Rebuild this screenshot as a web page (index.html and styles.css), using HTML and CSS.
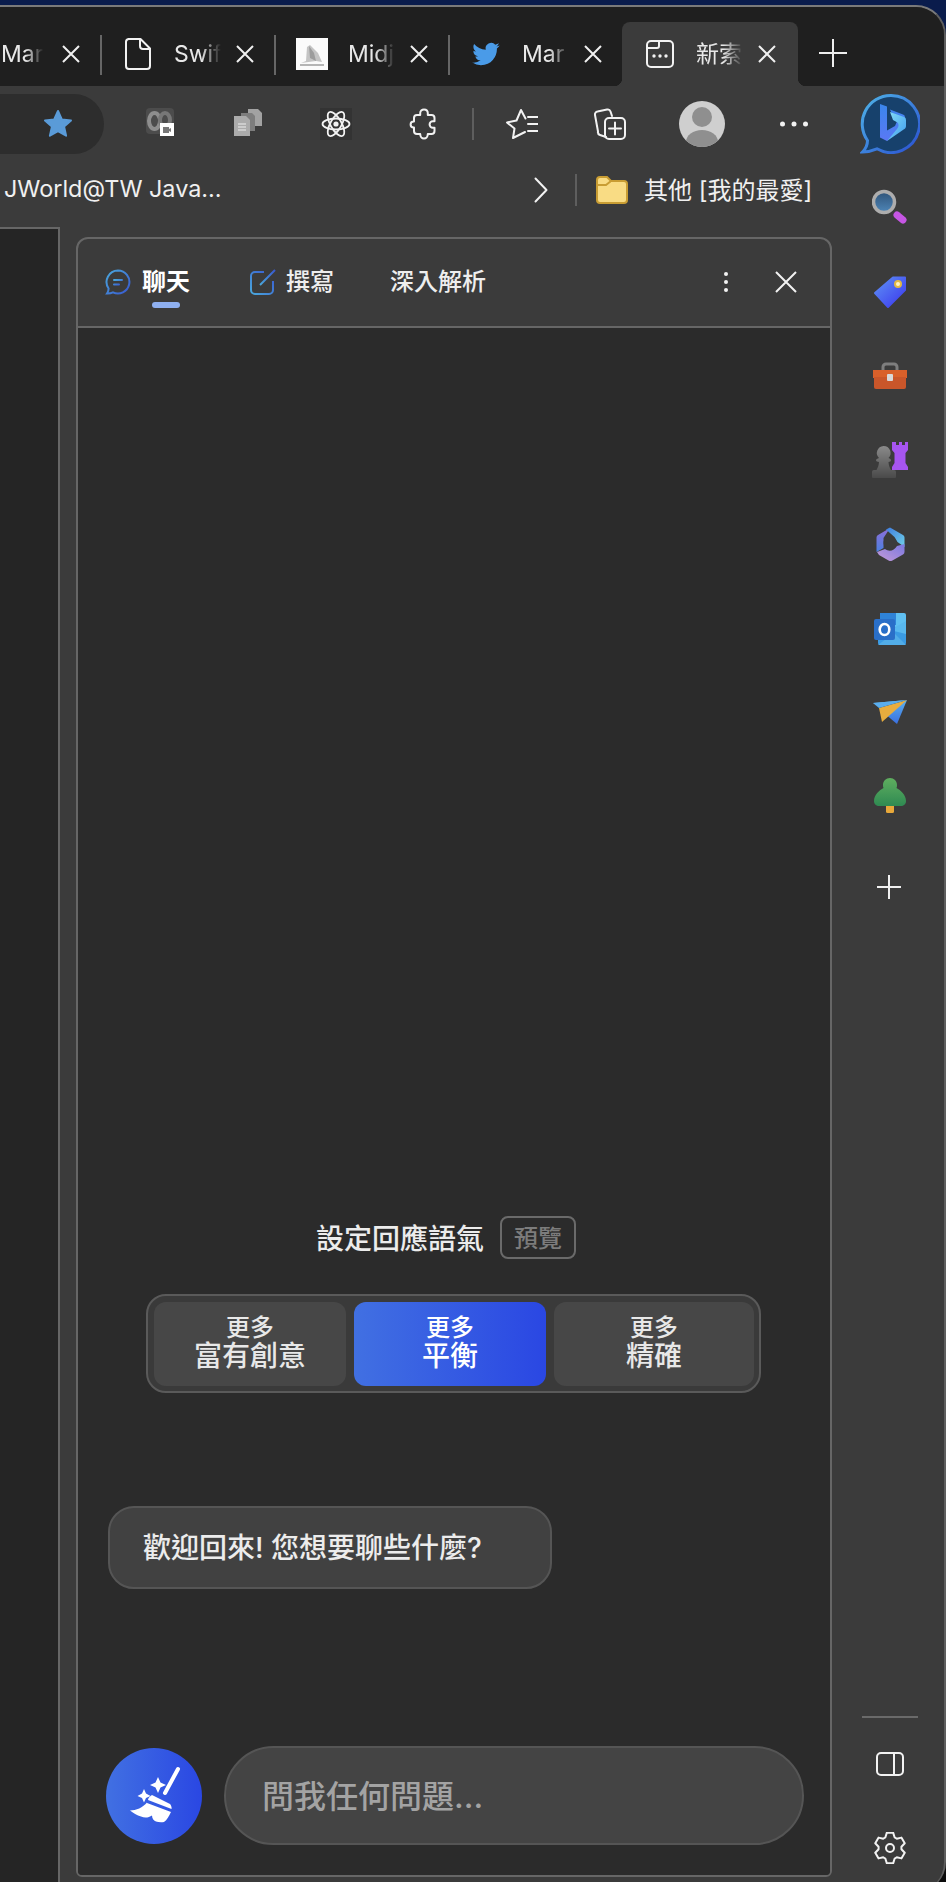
FILE: index.html
```html
<!DOCTYPE html>
<html lang="zh-Hant">
<head>
<meta charset="utf-8">
<title>Bing 聊天</title>
<link rel="stylesheet" href="styles.css">
</head>
<body>
<div class="window">
  <div class="tabstrip">
    <div class="tab tab-first">
      <span class="tab-label">Mar</span>
      <svg class="tab-close" viewBox="0 0 22 22"><path d="M3 3l16 16M19 3L3 19"/></svg>
    </div>
    <span class="tab-sep"></span>
    <div class="tab">
      <svg class="favicon" viewBox="0 0 32 32"><path class="line" d="M6.500 1h12L28 10.500V28a3 3 0 0 1-3 3H7a3 3 0 0 1-3-3V4a3 3 0 0 1 2.500-3zM18 1v7a3 3 0 0 0 3 3h7"/></svg>
      <span class="tab-label">Swif</span>
      <svg class="tab-close" viewBox="0 0 22 22"><path d="M3 3l16 16M19 3L3 19"/></svg>
    </div>
    <span class="tab-sep"></span>
    <div class="tab">
      <svg class="favicon" viewBox="0 0 32 32"><rect width="32" height="32" fill="#fbfbfb"/><path d="M5 25l5-2 1-14 3-2 8 8 4 9-6-1z" fill="#c4c4c4"/><path d="M13 8l1 12 6 3-2-8z" fill="#9c9c9c"/><path d="M4 26h24v2H4z" fill="#b5b5b5"/></svg>
      <span class="tab-label">Midj</span>
      <svg class="tab-close" viewBox="0 0 22 22"><path d="M3 3l16 16M19 3L3 19"/></svg>
    </div>
    <span class="tab-sep"></span>
    <div class="tab">
      <svg class="favicon" viewBox="-2 -2 28 28"><path fill="#4a9be8" d="M23.953 4.570a10 10 0 0 1-2.825.775 4.958 4.958 0 0 0 2.163-2.723c-.951.555-2.005.959-3.127 1.184a4.920 4.920 0 0 0-8.384 4.482C7.690 8.095 4.067 6.130 1.640 3.162a4.822 4.822 0 0 0-.666 2.475c0 1.710.870 3.213 2.188 4.096a4.904 4.904 0 0 1-2.228-.616v.060a4.923 4.923 0 0 0 3.946 4.827 4.996 4.996 0 0 1-2.212.085 4.936 4.936 0 0 0 4.604 3.417 9.867 9.867 0 0 1-6.102 2.105c-.390 0-.779-.023-1.170-.067a13.995 13.995 0 0 0 7.557 2.209c9.053 0 13.998-7.496 13.998-13.985 0-.210 0-.420-.015-.630A9.935 9.935 0 0 0 24 4.590z"/></svg>
      <span class="tab-label">Mar</span>
      <svg class="tab-close" viewBox="0 0 22 22"><path d="M3 3l16 16M19 3L3 19"/></svg>
    </div>
    <div class="tab tab-active">
      <svg class="favicon" viewBox="0 0 32 32"><path class="line" d="M7 3h18a4 4 0 0 1 4 4v18a4 4 0 0 1-4 4H7a4 4 0 0 1-4-4V7a4 4 0 0 1 4-4zM3 10h10a2 2 0 0 0 2-2V3"/><circle cx="10" cy="18" r="1.700" fill="#f2f2f2"/><circle cx="16" cy="18" r="1.700" fill="#f2f2f2"/><circle cx="22" cy="18" r="1.700" fill="#f2f2f2"/></svg>
      <span class="tab-label">新索</span>
      <svg class="tab-close" viewBox="0 0 22 22"><path d="M3 3l16 16M19 3L3 19"/></svg>
    </div>
    <svg class="newtab" viewBox="0 0 28 28"><path d="M14 0v28M0 14h28"/></svg>
  </div>

  <div class="toolbar">
    <div class="addr-end">
      <svg class="star" viewBox="0 0 32 32"><path d="M16 3l3.800 8.400 9.200 1-6.900 6.200 2 9.100L16 23.100 7.900 27.700l2-9.100L3 12.400l9.200-1z"/></svg>
    </div>
    <div class="tool">
      <svg class="i28" viewBox="0 0 28 28"><rect width="28" height="26" rx="4" fill="#4c4c4c"/><ellipse cx="8.500" cy="13" rx="5.500" ry="8" fill="none" stroke="#8e8e8e" stroke-width="4"/><ellipse cx="19" cy="12" rx="5" ry="7" fill="none" stroke="#777" stroke-width="4"/><rect x="14" y="15" width="14" height="14" fill="#fff"/><path d="M17 19h6v2l2-1v4l-2-1v2h-6z" fill="#777"/></svg>
    </div>
    <div class="tool">
      <svg class="i28" viewBox="0 0 28 28"><path d="M14 1h10l4 4v13H14z" fill="#a2a2a2"/><path d="M7 5h11l3 3v15H7z" fill="#7d7d7d"/><path d="M0 8h12l4 4v16H0z" fill="#ababab"/><path d="M4 16h8M4 19h8M4 22h8" stroke="#eee"/></svg>
    </div>
    <div class="tool">
      <svg class="i32 react" viewBox="0 0 32 32"><rect width="32" height="32" fill="#333"/><g class="line thin"><ellipse cx="16" cy="16" rx="13.500" ry="5.500"/><ellipse cx="16" cy="16" rx="13.500" ry="5.500" transform="rotate(60 16 16)"/><ellipse cx="16" cy="16" rx="13.500" ry="5.500" transform="rotate(120 16 16)"/></g><circle cx="16" cy="16" r="2.600" fill="#f2f2f2"/></svg>
    </div>
    <div class="tool">
      <svg class="i32" viewBox="0 0 28 32"><path class="line" d="M14 1.500c2.200 0 3.800 1.600 3.800 3.700V7h3.700a3 3 0 0 1 3 3v3.300h-1.700a3.200 3.200 0 0 0 0 6.400h1.700V23a3 3 0 0 1-3 3h-3.700c0 2.600-1.700 4.500-3.800 4.500s-3.800-1.900-3.800-4.500H7a3 3 0 0 1-3-3v-3.500h-.4a3 3 0 0 1 0-6H4V10a3 3 0 0 1 3-3h3.200V5.200c0-2.100 1.600-3.700 3.800-3.700z"/></svg>
    </div>
    <span class="tool-sep"></span>
    <div class="tool">
      <svg class="i32" viewBox="0 0 32 32"><path class="line" d="M19 24L7 30l1.500-9.500L1 14.500l9.500-2L15 2l4.500 8.500"/><path class="line" d="M22 9h10M22 16h10M22 23h10"/></svg>
    </div>
    <div class="tool">
      <svg class="i32" viewBox="0 0 32 32"><path class="line" d="M12 29L6 27a3 3 0 0 1-2-3.500L1 7a3 3 0 0 1 2.500-3.500L13 1.500a3 3 0 0 1 3.500 2L18 8"/><rect class="line" x="11" y="10" width="20" height="21" rx="4"/><path class="line" d="M21 14.500v12M15 20.500h12"/></svg>
    </div>
    <div class="tool tool-avatar">
      <svg class="avatar" viewBox="0 0 46 46"><defs><clipPath id="avclip"><circle cx="23" cy="23" r="23"/></clipPath></defs><circle cx="23" cy="23" r="23" fill="#cfcfcf"/><circle cx="23" cy="16" r="10" fill="#8f8f8f"/><ellipse cx="23" cy="41" rx="16" ry="12" fill="#8f8f8f" clip-path="url(#avclip)"/></svg>
    </div>
    <div class="tool">
      <svg class="dots" viewBox="0 0 28 6"><circle cx="2.500" cy="3" r="2.500"/><circle cx="14" cy="3" r="2.500"/><circle cx="25.500" cy="3" r="2.500"/></svg>
    </div>
    <svg class="bing" viewBox="0 0 60 60">
      <defs>
        <linearGradient id="bringg" x1="0" y1="0" x2="1" y2="1"><stop offset="0" stop-color="#4fb4e8"/><stop offset="1" stop-color="#2a4fd0"/></linearGradient>
        <linearGradient id="bb" x1="0" y1="0" x2="0" y2="1"><stop offset="0" stop-color="#3a86ec"/><stop offset="1" stop-color="#5a78f5"/></linearGradient>
        <linearGradient id="bc" x1="0" y1="0" x2="1" y2="1"><stop offset="0" stop-color="#86def5"/><stop offset="1" stop-color="#3f9cf0"/></linearGradient>
      </defs>
      <path d="M31 1.500a28.500 28.500 0 1 1-14 53.300c-4 1.700-9 3-14.500 3.200 3-3 5-7 5-11.500A28.500 28.500 0 0 1 31 1.500z" fill="#17416c" stroke="url(#bringg)" stroke-width="3"/>
      <path d="M20 10l7 2.500v24l8-4.500 3-7-5-2.500-3-7 13 5a3 3 0 0 1 2 3v6c0 1.500-.7 2.500-2 3.300L27 47l-7-3.500z" fill="url(#bb)"/>
      <path d="M30 18l14 5a3 3 0 0 1 2 3v6c0 1.500-.7 2.500-2 3.300L27 47l10-12c2-2.500 2-5 .5-6.500L33 26z" fill="url(#bc)"/>
    </svg>
  </div>

  <div class="main">
    <div class="content">
      <div class="bookmarks">
        <span class="bm-text">JWorld@TW Java...</span>
        <svg class="chevron" viewBox="0 0 14 26"><path class="line" d="M1.500 1.500L12.500 13 1.500 24.500"/></svg>
        <span class="bm-sep"></span>
        <svg class="folder" viewBox="0 0 32 28"><path d="M1 4a3 3 0 0 1 3-3h7l4 4h13a3 3 0 0 1 3 3v16a3 3 0 0 1-3 3H4a3 3 0 0 1-3-3z" fill="#f9dc84" stroke="#c99d33" stroke-width="2"/><path d="M1 9h9l5-4" fill="none" stroke="#c99d33" stroke-width="2"/></svg>
        <span class="bm-folder">其他 [我的最愛]</span>
      </div>

      <div class="workspace">
        <div class="page-stub"></div>
        <section class="panel">
          <header class="panel-head">
            <div class="ptab ptab-chat">
              <svg class="i26" viewBox="0 0 26 26"><defs><linearGradient id="chatg" x1="0" y1="0" x2="1" y2="1"><stop offset="0" stop-color="#4aa8dc"/><stop offset="1" stop-color="#3858d0"/></linearGradient></defs><path d="M13 1.500a11.500 11.500 0 1 1-5 21.900c-1.700.8-3.700 1.200-6 1.100 1-1.400 1.600-3 1.600-5A11.500 11.500 0 0 1 13 1.500z" fill="none" stroke="url(#chatg)" stroke-width="2"/><path d="M9 11h8M9 15.500h5" stroke="url(#chatg)" stroke-width="2" stroke-linecap="round"/></svg>
              <span class="ptab-label ptab-on">聊天</span>
              <span class="ptab-mark"></span>
            </div>
            <div class="ptab ptab-write">
              <svg class="i26" viewBox="0 0 26 26"><defs><linearGradient id="editg" x1="0" y1="1" x2="1" y2="0"><stop offset="0" stop-color="#4aa8dc"/><stop offset="1" stop-color="#3858d0"/></linearGradient></defs><path d="M14 3H5a4 4 0 0 0-4 4v14a4 4 0 0 0 4 4h14a4 4 0 0 0 4-4v-9" fill="none" stroke="url(#editg)" stroke-width="2"/><path d="M10 16L25 1" stroke="url(#editg)" stroke-width="2"/></svg>
              <span class="ptab-label">撰寫</span>
            </div>
            <div class="ptab ptab-deep">
              <span class="ptab-label">深入解析</span>
            </div>
            <svg class="kebab" viewBox="0 0 12 24"><circle cx="6" cy="4" r="2"/><circle cx="6" cy="12" r="2"/><circle cx="6" cy="20" r="2"/></svg>
            <svg class="panel-close" viewBox="0 0 22 22"><path d="M1 1l20 20M21 1L1 21"/></svg>
          </header>

          <div class="panel-body">
            <div class="tone-head">
              <span class="tone-title">設定回應語氣</span>
              <span class="badge">預覽</span>
            </div>
            <div class="segment">
              <div class="seg-btn"><span class="seg-sm">更多</span><span class="seg-lg">富有創意</span></div>
              <div class="seg-btn seg-active"><span class="seg-sm">更多</span><span class="seg-lg">平衡</span></div>
              <div class="seg-btn seg-wide"><span class="seg-sm">更多</span><span class="seg-lg">精確</span></div>
            </div>
            <div class="bubble">歡迎回來! 您想要聊些什麼?</div>
            <div class="composer">
              <div class="broom-btn">
                <svg class="broom" viewBox="0 0 96 96"><path d="M72 21L59 45" stroke="#fff" stroke-width="4" stroke-linecap="round"/><path d="M46 47l18 9c1 1 2 4 1.500 5L42 52c0-2 2-4 4-5z" fill="#fff"/><path d="M41 55l24 9c-2 4-4 8-7 10-3 .5-6 .2-8-.5-2-.5-4-3-4-6-3 2-7 3-11 1-4-1-8-4-11-6 6 0 13-3 17-8z" fill="#fff"/><path d="M52 29l2.500 5.500L60 37l-5.500 2.500L52 45l-2.500-5.500L44 37l5.500-2.500z" fill="#fff"/><path d="M38 41l2 4.500L44.500 48 40 50l-2 4.500L36 50l-4.500-2L36 45.500z" fill="#fff"/></svg>
              </div>
              <div class="input">問我任何問題...</div>
            </div>
          </div>
        </section>
      </div>
    </div>

    <aside class="sidebar">
      <svg class="side-icon" viewBox="0 0 36 36"><defs><linearGradient id="lens" x1="0" y1="0" x2="0" y2="1"><stop offset="0" stop-color="#2f5378"/><stop offset="1" stop-color="#4e86b8"/></linearGradient></defs><circle cx="12" cy="13" r="10.500" fill="url(#lens)" stroke="#adadad" stroke-width="3.500"/><path d="M25 26l6 5" stroke="#c656e4" stroke-width="7" stroke-linecap="round"/></svg>
      <svg class="side-icon" viewBox="0 0 36 36"><defs><linearGradient id="tagg" x1="0" y1="0" x2="1" y2="1"><stop offset="0" stop-color="#5f93f4"/><stop offset="1" stop-color="#3a35ee"/></linearGradient></defs><path d="M3 20L21 4.500h12V17L16 34z" fill="url(#tagg)" stroke="url(#tagg)" stroke-width="2" stroke-linejoin="round"/><circle cx="26" cy="11" r="3" fill="#fff3c0" stroke="#e2b843" stroke-width="2"/></svg>
      <svg class="side-icon" viewBox="0 0 36 36"><path d="M11 14V10a3 3 0 0 1 3-3h8a3 3 0 0 1 3 3v4" fill="none" stroke="#7e7e7e" stroke-width="3"/><path d="M1 13h34v8H1z" fill="#d9602a"/><path d="M2 20h32v10a2 2 0 0 1-2 2H4a2 2 0 0 1-2-2z" fill="#c9562a"/><rect x="15" y="17" width="6" height="7" rx="1" fill="#d8d8d8"/></svg>
      <svg class="side-icon" viewBox="0 0 36 36"><defs><linearGradient id="pawn" x1="0" y1="0" x2="0" y2="1"><stop offset="0" stop-color="#8a8a8a"/><stop offset="1" stop-color="#4a4a4a"/></linearGradient></defs><path d="M20 0h4v3h3V0h3v3h3V0h3v8l-2.500 3v10l2.500 4v3H20v-3l2.500-4V11L20 8z" fill="#a655f0"/><path d="M11.500 4a7 7 0 0 1 5 12c1.500.5 2.500 1.200 2.500 2.200s-1 1.600-2.500 1.800c.2 3 1 5.500 2.500 8h3a2 2 0 0 1 2 2v5a1 1 0 0 1-1 1H1a1 1 0 0 1-1-1v-5a2 2 0 0 1 2-2h2.500C6 25.500 6.800 23 7 20c-1.500-.2-3-.8-3-1.800s1.500-1.700 3-2.200a7 7 0 0 1 4.500-12z" fill="url(#pawn)"/></svg>
      <svg class="side-icon" viewBox="0 0 36 36"><defs><linearGradient id="cp1" x1="0" y1="0" x2="0" y2="1"><stop offset="0" stop-color="#8f6ed8"/><stop offset="1" stop-color="#4a80e0"/></linearGradient><linearGradient id="cp2" x1="0" y1="0" x2="1" y2="1"><stop offset="0" stop-color="#3f7de0"/><stop offset="1" stop-color="#6fd0e8"/></linearGradient><linearGradient id="cp3" x1="1" y1="0" x2="0" y2="1"><stop offset="0" stop-color="#7a78e0"/><stop offset="1" stop-color="#c49ad8"/></linearGradient></defs><path d="M18 2l-12 7a3 3 0 0 0-1.500 2.500V26l7-4V12z" fill="url(#cp1)"/><path d="M14 3.500L18 1.500l13 7.500a3 3 0 0 1 1.500 2.500V21l-7-5-3-5z" fill="url(#cp2)"/><path d="M32.500 18v8a3 3 0 0 1-1.500 2.500l-11 6.200c-1 .5-2 .5-3 0L7 29l-2-3 8-3c4 3 9 2 12-3z" fill="url(#cp3)"/><circle cx="18" cy="17" r="6.500" fill="#3b3b3b"/></svg>
      <svg class="side-icon" viewBox="0 0 36 36"><path d="M8 3h24a2 2 0 0 1 2 2v12H8z" fill="#5fc0f2"/><path d="M8 3h16v12H8z" fill="#2f83d8"/><path d="M6 19h28v14a2 2 0 0 1-2 2H8a2 2 0 0 1-2-2z" fill="#3a9be4"/><path d="M18 20l16-9v13z" fill="#58b8ef"/><path d="M6 35l16-12 12 12z" fill="#52ade8"/><rect x="2" y="9" width="21" height="21" rx="2" fill="#2a6fc8"/><ellipse cx="12.500" cy="19.500" rx="4.800" ry="5.500" fill="none" stroke="#fff" stroke-width="2.600"/></svg>
      <svg class="side-icon" viewBox="0 0 36 36"><defs><linearGradient id="pl" x1="0" y1="0" x2="0" y2="1"><stop offset="0" stop-color="#5ab0ee"/><stop offset="1" stop-color="#3a6fe0"/></linearGradient></defs><path d="M1 9l34-3-28 5z" fill="#62b8f0"/><path d="M12 19L35 6 25 30z" fill="url(#pl)"/><path d="M7 14L35 6 10 28z" fill="#e8ad3e"/><path d="M1 9l6 5 28-8z" fill="#5aaeee"/></svg>
      <svg class="side-icon" viewBox="0 0 36 36"><defs><linearGradient id="tr" x1="0" y1="0" x2="0" y2="1"><stop offset="0" stop-color="#5fae5f"/><stop offset="1" stop-color="#2f8a52"/></linearGradient></defs><rect x="14" y="26" width="8" height="9" rx="1.500" fill="#e8a83a"/><path d="M18 0c4 0 7 3 7 7 0 1 0 2-.5 3 4 2 9.500 7 9.500 13 0 3.500-2.500 5-5 5H7c-2.500 0-5-1.500-5-5 0-6 5.500-11 9.500-13-.5-1-.5-2-.5-3 0-4 3-7 7-7z" fill="url(#tr)"/></svg>
      <svg class="side-plus" viewBox="0 0 24 24"><path d="M12 0v24M0 12h24"/></svg>
      <div class="side-bottom">
        <span class="side-rule"></span>
        <svg class="side-layout" viewBox="0 0 28 24"><rect class="line" x="1" y="1" width="26" height="22" rx="4"/><path class="line" d="M18 1v22"/></svg>
        <svg class="side-gear" viewBox="0 0 32 32"><path class="line" d="M12.780.840h6.440l1.460 4.650 2.080 1.210 4.760-1.070 3.220 5.580-3.300 3.590v2.400l3.300 3.590-3.220 5.580-4.760-1.070-2.080 1.210-1.460 4.650h-6.440l-1.460-4.650-2.080-1.210-4.760 1.070-3.220-5.580 3.300-3.590v-2.400l-3.300-3.590 3.220-5.580 4.760 1.070 2.080-1.210z"/><circle class="line" cx="16" cy="16" r="4"/></svg>
      </div>
    </aside>
  </div>
</div>
</body>
</html>
```

FILE: styles.css
```css
* { box-sizing: border-box; }
html, body { margin: 0; padding: 0; overflow: hidden; }
body {
  width: 946px;
  height: 1882px;
  background: linear-gradient(#0a1c4c 60px, #0c0c0c 60px);
  font-family: Inter, "Noto Sans CJK TC", sans-serif;
  color: #f0f0f0;
  padding-top: 5px;
}
svg { display: block; flex: none; }
.line { fill: none; stroke: #f2f2f2; stroke-width: 2; stroke-linejoin: round; stroke-linecap: round; }
.thin { stroke-width: 1.800; }

.window {
  width: 946px;
  height: 1887px;
  background: #3b3b3b;
  border-top: 2px solid #7a7a7a;
  border-right: 2px solid #5e5e5e;
  border-top-right-radius: 30px;
  border-bottom-right-radius: 30px;
  overflow: hidden;
  display: flex;
  flex-direction: column;
}

/* tab strip */
.tabstrip {
  height: 79px;
  flex: none;
  background: #1f1f1f;
  padding-top: 15px;
  display: flex;
  align-items: flex-start;
}
.tab {
  width: 172px;
  height: 64px;
  padding-left: 20px;
  display: flex;
  align-items: center;
  flex: none;
}
.tab-first { width: 100px; padding-left: 0; }
.tab-sep { width: 2px; height: 40px; margin-top: 13px; background: #666; flex: none; }
.tab-active {
  position: relative;
  width: 176px;
  padding-left: 22px;
  background: #3b3b3b;
  border-radius: 8px 8px 0 0;
}
.tab-active::before,
.tab-active::after {
  content: "";
  position: absolute;
  bottom: 0;
  width: 8px;
  height: 8px;
  background: radial-gradient(circle at var(--c) 0, #1f1f1f 8px, #3b3b3b 8.500px);
}
.tab-active::before { left: -8px; --c: 0; }
.tab-active::after { right: -8px; --c: 100%; }
.favicon { width: 32px; height: 32px; margin-right: 20px; }
.tab-label {
  width: 47px;
  font-size: 23px;
  line-height: 30px;
  white-space: nowrap;
  color: #e8e8e8;
  flex: none;
  -webkit-mask-image: linear-gradient(90deg, #000 58%, transparent 100%);
  mask-image: linear-gradient(90deg, #000 58%, transparent 100%);
}
.tab-first .tab-label { width: 60px; padding-left: 1px; margin-right: -13px; -webkit-mask-image: linear-gradient(90deg, #000 42%, transparent 72%); mask-image: linear-gradient(90deg, #000 42%, transparent 72%); }
.tab-close { width: 22px; height: 22px; margin-left: 13px; fill: none; stroke: #f0f0f0; stroke-width: 2; }
.newtab { width: 28px; height: 28px; margin: 17px 0 0 21px; fill: none; stroke: #eee; stroke-width: 2; }

/* toolbar */
.toolbar {
  height: 79px;
  flex: none;
  display: flex;
  align-items: center;
}
.addr-end {
  width: 104px;
  height: 60px;
  margin-right: 12px;
  margin-top: -4px;
  background: #2d2d2d;
  border-radius: 0 30px 30px 0;
  display: flex;
  align-items: center;
  padding-left: 42px;
}
.star { width: 32px; height: 32px; fill: #5a9bd8; stroke: #5a9bd8; stroke-width: 2; stroke-linejoin: round; }
.tool {
  width: 88px;
  height: 60px;
  margin-top: -4px;
  display: flex;
  align-items: center;
  justify-content: center;
  flex: none;
}
.tool-avatar { width: 96px; }
.tool-sep { width: 2px; height: 32px; margin: -4px 4px 0; background: #5e5e5e; flex: none; }
.i28 { width: 28px; height: 28px; margin-top: -3px; }
.i32 { width: 32px; height: 32px; }
.i26 { width: 26px; height: 26px; }
.avatar { width: 46px; height: 46px; }
.dots { width: 28px; height: 6px; fill: #f2f2f2; }
.bing { width: 60px; height: 60px; margin: -4px 0 0 22px; }

/* main */
.main { height: 1717px; flex: none; display: flex; }
.content { width: 846px; flex: none; display: flex; flex-direction: column; }
.bookmarks {
  height: 50px;
  margin-bottom: 12px;
  flex: none;
  display: flex;
  align-items: center;
  color: #f0f0f0;
  padding-left: 4px;
}
.bm-text { width: 530px; font-size: 23.400px; padding-bottom: 4px; white-space: nowrap; flex: none; }
.chevron { width: 14px; height: 26px; }
.bm-sep { width: 2px; height: 32px; background: #5e5e5e; margin: 0 19px 0 27px; flex: none; }
.folder { width: 32px; height: 28px; margin-right: 16px; }
.bm-folder { font-size: 24px; padding-bottom: 4px; white-space: nowrap; }

.workspace { flex: 1; display: flex; min-height: 0; }
.page-stub {
  width: 60px;
  flex: none;
  background: #252525;
  border-top: 2px solid #666;
  border-right: 2px solid #666;
}
.panel {
  width: 756px;
  margin: 10px 0 5px 16px;
  flex: none;
  border: 2px solid #666;
  border-radius: 12px 12px 6px 6px;
  overflow: hidden;
  display: flex;
  flex-direction: column;
}
.panel-head {
  height: 89px;
  flex: none;
  padding: 0 33px 2px 27px;
  border-bottom: 2px solid #666;
  display: flex;
  align-items: center;
}
.ptab { position: relative; display: flex; align-items: center; flex: none; }
.ptab-label { font-size: 24px; font-weight: 500; line-height: 32px; color: #eee; white-space: nowrap; }
.ptab-on { font-weight: 700; color: #fff; }
.ptab-chat .i26 { margin-right: 11px; }
.ptab-write .i26 { margin-right: 10px; }
.ptab-write { margin-left: 60px; }
.ptab-deep { margin-left: 56px; }
.ptab-mark {
  position: absolute;
  left: 47px;
  top: 36px;
  width: 28px;
  height: 6px;
  border-radius: 3px;
  background: #8fb0f0;
}
.kebab { width: 12px; height: 24px; margin-left: auto; fill: #f2f2f2; }
.panel-close { width: 22px; height: 22px; margin-left: 43px; fill: none; stroke: #f2f2f2; stroke-width: 2; }

.panel-body {
  flex: 1;
  background: #2b2b2b;
  display: flex;
  flex-direction: column;
  justify-content: flex-end;
  padding-bottom: 30px;
}
.tone-head {
  display: flex;
  align-items: center;
  padding-left: 238px;
  margin-bottom: 35px;
}
.tone-title { font-size: 28px; font-weight: 500; line-height: 40px; margin-top: 3px; color: #ececec; white-space: nowrap; }
.badge {
  width: 76px;
  height: 43px;
  margin-left: 16px;
  padding-bottom: 2px;
  border: 2px solid #6a6a6a;
  border-radius: 8px;
  font-size: 24px;
  font-weight: 500;
  color: #7c7c7c;
  display: flex;
  align-items: center;
  justify-content: center;
}
.segment {
  width: 615px;
  height: 99px;
  margin: 0 0 113px 68px;
  padding: 6px 6px 5px;
  border: 2px solid #5a5a5a;
  border-radius: 20px;
  background: #3a3a3a;
  display: flex;
  gap: 8px;
}
.seg-btn {
  width: 192px;
  flex: none;
  background: #474747;
  border-radius: 12px;
  display: flex;
  flex-direction: column;
  align-items: center;
  justify-content: center;
  padding-bottom: 4px;
  color: #e8e8e8;
}
.seg-wide { width: 200px; }
.seg-active { background: linear-gradient(90deg, #4170e2, #2a47e3); color: #fff; }
.seg-sm { font-size: 24px; font-weight: 500; line-height: 29px; }
.seg-lg { font-size: 28px; line-height: 29px; font-weight: 500; }

.bubble {
  width: 444px;
  height: 83px;
  margin: 0 0 157px 30px;
  padding: 0 0 3px 33px;
  background: #414141;
  border: 2px solid #555;
  border-radius: 26px;
  font-size: 28px;
  font-weight: 500;
  color: #ececec;
  display: flex;
  align-items: center;
  white-space: nowrap;
}
.composer { display: flex; align-items: center; padding-left: 28px; }
.broom-btn {
  width: 96px;
  height: 96px;
  border-radius: 50%;
  background: linear-gradient(90deg, #4170e2, #2a47e3);
  flex: none;
}
.broom { width: 96px; height: 96px; }
.input {
  width: 580px;
  height: 99px;
  margin-left: 22px;
  padding: 0 0 3px 36px;
  background: #444;
  border: 2px solid #555;
  border-radius: 50px;
  font-size: 32px;
  font-weight: 500;
  color: #a3a3a3;
  display: flex;
  align-items: center;
  white-space: nowrap;
}

/* sidebar */
.sidebar {
  width: 88px;
  flex: none;
  padding: 24px 0 18px;
  display: flex;
  flex-direction: column;
  align-items: center;
  gap: 48.200px;
}
.side-icon { width: 36px; height: 36px; }
.side-plus { width: 24px; height: 24px; margin: 12px 2px 0 0; fill: none; stroke: #f0f0f0; stroke-width: 2; }
.side-bottom {
  margin-top: auto;
  display: flex;
  flex-direction: column;
  align-items: center;
}
.side-rule { width: 56px; height: 2px; background: #6a6a6a; }
.side-layout { width: 28px; height: 24px; margin-top: 34px; }
.side-gear { width: 32px; height: 32px; margin-top: 56px; }
```
